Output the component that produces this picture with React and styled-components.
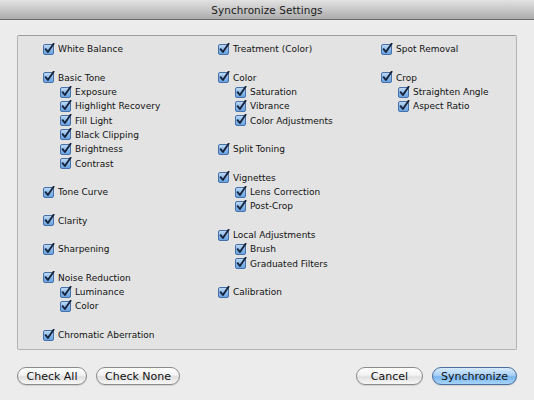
import React, { useState } from "react";
import styled, { createGlobalStyle } from "styled-components";

const GlobalStyle = createGlobalStyle`
  html, body {
    margin: 0;
    padding: 0;
    background: #ececec;
  }
  body {
    font-family: "DejaVu Sans", "Liberation Sans", sans-serif;
    color: #111;
  }
`;

const Window = styled.div`
  width: 534px;
  height: 400px;
  display: flex;
  flex-direction: column;
  background: #ececec;
  box-sizing: border-box;
`;

const TitleBar = styled.div`
  height: 19px;
  flex: none;
  display: flex;
  align-items: center;
  justify-content: center;
  background: linear-gradient(#e2e2e2, #c8c8c8 50%, #acacac);
  border-bottom: 1px solid #6c6c6c;
  font-size: 10.4px;
  color: #1a1a1a;
  letter-spacing: 0.1px;
`;

const Body = styled.div`
  flex: 1;
  display: flex;
  flex-direction: column;
  padding: 15px 17px 0;
`;

const Panel = styled.div`
  height: 315px;
  box-sizing: border-box;
  display: grid;
  grid-template-columns: 175px 163px 1fr;
  padding: 6px 0 0 25px;
  background: #e3e3e3;
  border: 1px solid #b3b3b3;
  border-top-color: #9d9d9d;
  border-radius: 2px;
`;

const Column = styled.div`
  display: flex;
  flex-direction: column;
`;

const Group = styled.div`
  display: flex;
  flex-direction: column;
  margin-bottom: 14.3px;
`;

const Row = styled.label`
  height: 14.3px;
  display: flex;
  align-items: center;
  gap: 3px;
  padding-left: ${({ $sub }) => ($sub ? "17px" : "0")};
  font-size: 9px;
  white-space: nowrap;
  cursor: default;
`;

const BoxWrap = styled.span`
  width: 12px;
  height: 12px;
  flex: none;
  display: inline-flex;
  margin-top: -1px;
`;

const Footer = styled.div`
  display: flex;
  align-items: center;
  justify-content: space-between;
  margin-top: 17px;
`;

const ButtonGroup = styled.div`
  display: flex;
  gap: 9px;
`;

const Button = styled.button`
  height: 18px;
  min-width: ${({ $w }) => $w || 60}px;
  padding: 0 8px;
  box-sizing: border-box;
  border-radius: 9px;
  font-family: "DejaVu Sans", "Liberation Sans", sans-serif;
  font-size: 11px;
  color: #111;
  border: 1px solid ${({ $primary }) => ($primary ? "#4d6d9c" : "#8b8b8b")};
  background: ${({ $primary }) =>
    $primary
      ? "linear-gradient(#d8ebfc, #a9d1f6 45%, #7ab6ee 55%, #a6d4fa)"
      : "linear-gradient(#ffffff, #f2f2f2 45%, #e0e0e0 55%, #f7f7f7)"};
  box-shadow: 0 1px 1px rgba(0, 0, 0, 0.12);
  display: flex;
  align-items: center;
  justify-content: center;
  cursor: default;
`;

const CheckBox = ({ checked }) => (
  <BoxWrap>
    <svg width="12" height="12" viewBox="0 0 12 12">
      <defs>
        <linearGradient id="cbg" x1="0" y1="0" x2="0" y2="1">
          <stop offset="0" stopColor="#c4ddf6" />
          <stop offset="0.5" stopColor="#8bb9ea" />
          <stop offset="1" stopColor="#66a0e0" />
        </linearGradient>
      </defs>
      <rect
        x="0.5"
        y="1.5"
        width="10"
        height="10"
        rx="1.5"
        fill={checked ? "url(#cbg)" : "#fff"}
        stroke={checked ? "#4670a8" : "#888"}
      />
      {checked && (
        <path
          d="M2.6 6.2 L4.9 9 L10.6 0.8"
          fill="none"
          stroke="#17233a"
          strokeWidth="1.9"
          strokeLinecap="round"
          strokeLinejoin="round"
        />
      )}
    </svg>
  </BoxWrap>
);

const columns = [
  [
    ["White Balance"],
    ["Basic Tone", "Exposure", "Highlight Recovery", "Fill Light", "Black Clipping", "Brightness", "Contrast"],
    ["Tone Curve"],
    ["Clarity"],
    ["Sharpening"],
    ["Noise Reduction", "Luminance", "Color"],
    ["Chromatic Aberration"],
  ],
  [
    ["Treatment (Color)"],
    ["Color", "Saturation", "Vibrance", "Color Adjustments"],
    ["Split Toning"],
    ["Vignettes", "Lens Correction", "Post-Crop"],
    ["Local Adjustments", "Brush", "Graduated Filters"],
    ["Calibration"],
  ],
  [
    ["Spot Removal"],
    ["Crop", "Straighten Angle", "Aspect Ratio"],
  ],
];

export default function App() {
  const [all, setAll] = useState(true);

  return (
    <Window>
      <GlobalStyle />
      <TitleBar>Synchronize Settings</TitleBar>
      <Body>
        <Panel>
          {columns.map((groups, ci) => (
            <Column key={ci}>
              {groups.map(([head, ...subs]) => (
                <Group key={head}>
                  <Row>
                    <CheckBox checked={all} />
                    {head}
                  </Row>
                  {subs.map(s => (
                    <Row $sub key={s}>
                      <CheckBox checked={all} />
                      {s}
                    </Row>
                  ))}
                </Group>
              ))}
            </Column>
          ))}
        </Panel>
        <Footer>
          <ButtonGroup>
            <Button $w={70} onClick={() => setAll(true)}>Check All</Button>
            <Button $w={83} onClick={() => setAll(false)}>Check None</Button>
          </ButtonGroup>
          <ButtonGroup>
            <Button $w={67}>Cancel</Button>
            <Button $w={84} $primary>Synchronize</Button>
          </ButtonGroup>
        </Footer>
      </Body>
    </Window>
  );
}
